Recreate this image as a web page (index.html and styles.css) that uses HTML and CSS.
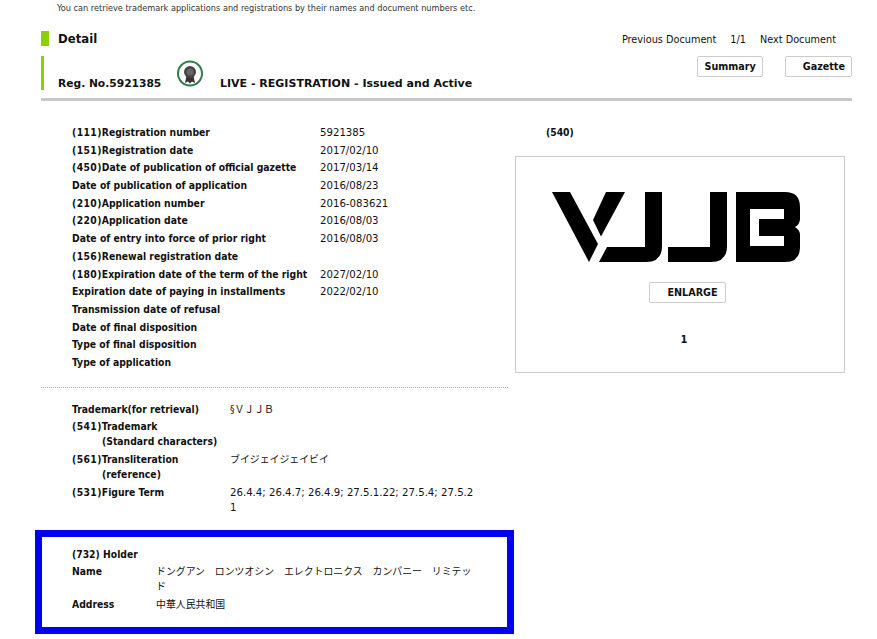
FILE: index.html
```html
<!DOCTYPE html>
<html lang="en">
<head>
    <meta charset="UTF-8">
    <meta name="viewport" content="width=device-width, initial-scale=1.0">
    <title>Detail</title>
    <link rel="stylesheet" href="styles.css">
</head>
<body>
    <p class="lead">You can retrieve trademark applications and registrations by their names and document numbers etc.</p>
    <div class="wrap">
        <div class="detail-row">
            <h2 class="detail-title">Detail</h2>
            <div class="pager"><span>Previous Document</span><span>1/1</span><span>Next Document</span></div>
        </div>
        <div class="reg-bar">
            <div class="reg-info">
                <span class="reg-no">Reg. No.5921385</span>
                <svg class="badge" width="26" height="28" viewBox="0 0 26 28">
                    <circle cx="13" cy="13.5" r="12" fill="#fff" stroke="#2f7d4a" stroke-width="2"/>
                    <path d="M9.5 16 L8 23 L11 21.5 L13 23.5 L15 21.5 L18 23 L16.5 16 Z" fill="#333"/>
                    <circle cx="13" cy="12" r="6" fill="#444"/>
                    <circle cx="13" cy="12" r="3.5" fill="#666"/>
                </svg>
                <span class="reg-status">LIVE - REGISTRATION - Issued and Active</span>
            </div>
            <div class="reg-btns">
                <span class="btn">Summary</span>
                <span class="btn btn-icon">Gazette</span>
            </div>
        </div>
        <div class="main">
            <div class="left">
                <dl class="biblio first">
                    <div><dt><span class="code">(111)</span>Registration number</dt><dd>5921385</dd></div>
                    <div><dt><span class="code">(151)</span>Registration date</dt><dd>2017/02/10</dd></div>
                    <div><dt><span class="code">(450)</span>Date of publication of official gazette</dt><dd>2017/03/14</dd></div>
                    <div><dt>Date of publication of application</dt><dd>2016/08/23</dd></div>
                    <div><dt><span class="code">(210)</span>Application number</dt><dd>2016-083621</dd></div>
                    <div><dt><span class="code">(220)</span>Application date</dt><dd>2016/08/03</dd></div>
                    <div><dt>Date of entry into force of prior right</dt><dd>2016/08/03</dd></div>
                    <div><dt><span class="code">(156)</span>Renewal registration date</dt><dd></dd></div>
                    <div><dt><span class="code">(180)</span>Expiration date of the term of the right</dt><dd>2027/02/10</dd></div>
                    <div><dt>Expiration date of paying in installments</dt><dd>2022/02/10</dd></div>
                    <div><dt>Transmission date of refusal</dt><dd></dd></div>
                    <div><dt>Date of final disposition</dt><dd></dd></div>
                    <div><dt>Type of final disposition</dt><dd></dd></div>
                    <div><dt>Type of application</dt><dd></dd></div>
                </dl>
                <dl class="biblio second">
                    <div><dt>Trademark(for retrieval)</dt><dd class="ja">§ＶＪＪＢ</dd></div>
                    <div><dt><span class="code">(541)</span>Trademark<span class="sub">(Standard characters)</span></dt><dd></dd></div>
                    <div><dt><span class="code">(561)</span>Transliteration<span class="sub">(reference)</span></dt><dd class="ja">ブイジェイジェイビイ</dd></div>
                    <div><dt><span class="code">(531)</span>Figure Term</dt><dd>26.4.4; 26.4.7; 26.4.9; 27.5.1.22; 27.5.4; 27.5.2<br>1</dd></div>
                </dl>
                <dl class="biblio holder">
                    <div class="holder-head"><dt>(732) Holder</dt></div>
                    <div><dt>Name</dt><dd class="ja">ドングアン　ロンツオシン　エレクトロニクス　カンパニー　リミテッ<br>ド</dd></div>
                    <div><dt>Address</dt><dd class="ja">中華人民共和国</dd></div>
                </dl>
            </div>
            <div class="right">
                <div class="mark-label">(540)</div>
                <div class="mark-box">
                    <svg class="logo" width="250" height="70" viewBox="0 0 250 70">
                        <path d="M0 0H18L46 52L37 70Z"/>
                        <path d="M54 0H73L49 44.5L41 28Z"/>
                        <path d="M93 0H110V54Q110 70 94 70H47L55 55H93Z"/>
                        <path d="M158 0H175V54Q175 70 159 70H116V55H158Z"/>
                        <path fill-rule="evenodd" d="M184 0H233Q248 0 248 15V27Q248 32 243 35Q248 38 248 43V55Q248 70 233 70H184ZM198 17V54H232V44H207V27H232V17Z"/>
                    </svg>
                    <span class="btn btn-icon btn-enlarge">ENLARGE</span>
                    <div class="mark-no">1</div>
                </div>
            </div>
        </div>
    </div>
</body>
</html>
```
FILE: styles.css
```css
body {
    margin: 0;
    font-family: "DejaVu Sans Condensed", "DejaVu Sans", "Noto Sans CJK JP", sans-serif;
    font-stretch: condensed;
    font-size: 11px;
    color: #111;
    background: #fff;
}

.lead {
    margin: 0;
    padding: 2px 0 0 57px;
    font-size: 9.1px;
    line-height: 12px;
    color: #333;
}

.wrap {
    margin: 0 25px 0 41px;
}

.detail-row {
    display: flex;
    justify-content: space-between;
    margin-top: 17px;
}

.detail-title {
    margin: 0;
    border-left: 8px solid #8cd000;
    padding-left: 9px;
    font-size: 13px;
    font-weight: bold;
    line-height: 15px;
}

.pager {
    display: flex;
    gap: 14px;
    padding: 2px 16px 0 0;
    font-size: 10.8px;
    line-height: 13px;
}

.reg-bar {
    display: flex;
    justify-content: space-between;
    margin-top: 10px;
    border-bottom: 3px solid #c8c8c8;
    height: 42px;
}

.reg-info {
    display: flex;
    align-items: flex-end;
    border-left: 3px solid #8cd000;
    padding-left: 14px;
    height: 34px;
    font-family: "DejaVu Sans", sans-serif;
    font-stretch: normal;
    font-weight: bold;
    font-size: 11px;
    line-height: 13px;
}

.reg-no {
    width: 119px;
    font-size: 10.7px;
}

.badge {
    margin-bottom: 2px;
}

.reg-status {
    margin-left: 17px;
}

.reg-btns {
    display: flex;
    gap: 22px;
    align-items: flex-start;
}

.btn {
    display: inline-block;
    box-sizing: border-box;
    height: 21px;
    padding: 0 6px;
    border: 1px solid #ccc;
    border-radius: 2px;
    font-weight: bold;
    font-size: 10.7px;
    line-height: 19px;
    background: #fff;
}

.btn-icon {
    padding-left: 17px;
}

.main {
    display: flex;
}

.left {
    width: 467px;
    flex: none;
}

.biblio {
    margin: 0;
}

.biblio > div {
    display: flex;
}

.biblio dt {
    flex: none;
    font-weight: bold;
    font-size: 10.3px;
    white-space: nowrap;
}

.biblio dd {
    margin: 0;
    font-size: 11.3px;
}

.biblio .ja {
    font-size: 9.9px;
}

.code {
    letter-spacing: 0.4px;
}

.first {
    padding: 23px 0 15px 31px;
    border-bottom: 1px dotted #aaa;
}

.first > div {
    height: 17.7px;
    line-height: 17.7px;
}

.first dt {
    width: 248px;
}

.second {
    padding: 14px 0 0 31px;
}

.second > div {
    margin-bottom: 2.7px;
    line-height: 15px;
}

.second dt {
    width: 158px;
}

.sub {
    display: block;
    padding-left: 30px;
}

.holder {
    width: 479px;
    box-sizing: border-box;
    margin: 15px 0 0 -6px;
    border: 7px solid #0000f0;
    padding: 10px 0 12px 30px;
}

.holder > div {
    line-height: 15px;
    margin-bottom: 2.7px;
}

.holder dt {
    width: 84px;
}

.holder-head dt {
    width: auto;
}

.right {
    margin-left: 7px;
    width: 330px;
}

.mark-label {
    padding: 23px 0 0 31px;
    font-weight: bold;
    font-size: 10.3px;
    line-height: 17px;
}

.mark-box {
    display: flex;
    flex-direction: column;
    align-items: center;
    box-sizing: border-box;
    width: 330px;
    height: 217px;
    margin-top: 15px;
    border: 1px solid #ccc;
}

.logo {
    align-self: flex-start;
    margin: 35px 0 0 36px;
    filter: blur(0.5px);
}

.btn-enlarge {
    margin: 20px 0 0 15px;
    padding-right: 7px;
}

.mark-no {
    margin: 31px 0 0 8px;
    font-weight: bold;
    line-height: 12px;
}
```
